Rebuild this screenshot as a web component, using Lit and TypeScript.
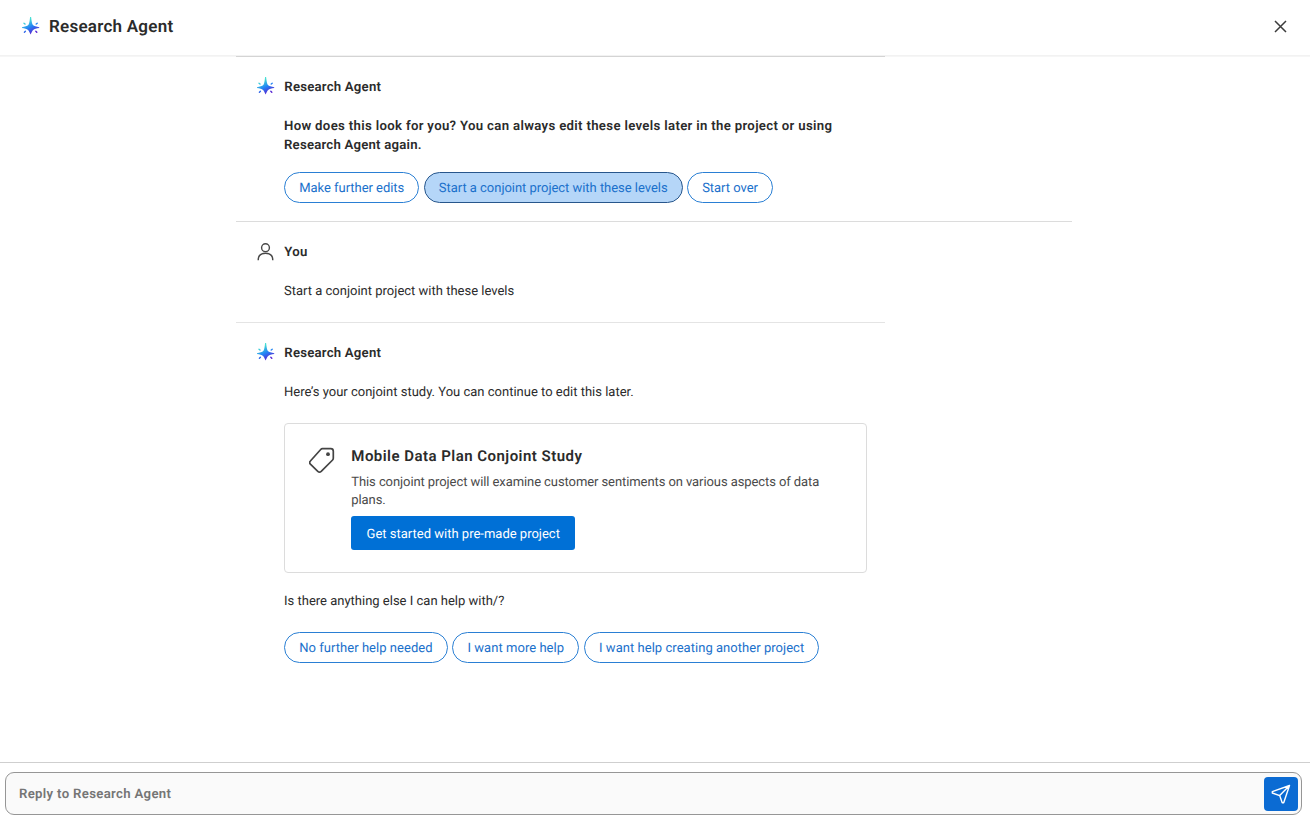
import { LitElement, html, css, svg } from "lit";
import { customElement, property } from "lit/decorators.js";
import { classMap } from "lit/directives/class-map.js";

@customElement("agent-spark")
class AgentSpark extends LitElement {
  static styles = css`
    :host { display: block; width: 18px; height: 18px; }
    svg { display: block; }
  `;
  render() {
    return html`<svg width="18" height="18" viewBox="0 0 18 18">
      <defs>
        <linearGradient id="g" gradientUnits="userSpaceOnUse" x1="6" y1="3" x2="12.5" y2="16">
          <stop offset="0" stop-color="#45dfd2" />
          <stop offset=".5" stop-color="#2484f5" />
          <stop offset="1" stop-color="#5a1fd0" />
        </linearGradient>
      </defs>
      <path fill="url(#g)" d="M8.1 0H9.1C9.5 2.8 9.7 6 10.7 7.8C12 9.2 14.5 9.8 17.2 10.2V11.1C14.5 11.4 12.3 12 11.2 13C10.2 14 9.4 15.6 8.6 17.6C7.8 15.6 7 14 6 13C4.9 12 2.7 11.4 0 11.1V10.2C2.7 9.8 5.2 9.2 6.5 7.8C7.5 6 7.7 2.8 8.1 0Z" />
      <path stroke="url(#g)" stroke-width="1.4" stroke-linecap="round" fill="none" d="M2 6.2L3 7M15.2 6.2L14.2 7M2.4 15.3L3.4 14.3M14.8 15.3L13.8 14.3" />
    </svg>`;
  }
}

@customElement("reply-pill")
class ReplyPill extends LitElement {
  @property() label = "";
  @property({ type: Boolean }) chosen = false;
  static styles = css`
    :host { display: block; }
    .pill {
      box-sizing: border-box; height: 31px; padding: 1px 14.2px 0; border: 1px solid #2a7fd4;
      border-radius: 16px; background: #fff; color: #1a70cb; font: inherit; text-rendering: inherit;
      letter-spacing: inherit; line-height: 28px; white-space: nowrap; display: block;
    }
    .pill span { display: block; padding-top: 1px; }
    .chosen { background: #b5d6f8; border-color: #27568c; }
  `;
  render() {
    return html`<button class=${classMap({ pill: true, chosen: this.chosen })}><span>${this.label}</span></button>`;
  }
}

const closeIcon = svg`<path d="M1 1L12 12M12 1L1 12" />`;

@customElement("app-root")
class AppRoot extends LitElement {
  static styles = css`
    :host {
      display: flex; flex-direction: column; height: 825px; background: #fff; color: #2b2b2b;
      font-family: Roboto, "Liberation Sans", sans-serif; font-size: 13px; letter-spacing: 0;
      line-height: 18.7px; overflow: hidden; text-rendering: geometricPrecision;
    }
    header {
      box-sizing: border-box; flex: none; height: 56px; padding: 0 23px 3px 22px; display: flex;
      align-items: center; gap: 9px; box-shadow: inset 0 -1px #f2f2f2;
    }
    h1 { margin: 1px 0 0; flex: 1; font-size: 17px; line-height: 24px; font-weight: 600; letter-spacing: 0.25px; }
    header agent-spark { margin-top: -1px; }
    .close { padding: 0; border: 0; background: none; width: 13px; height: 13px; }
    .close svg { display: block; fill: none; stroke: #3c3c3c; stroke-width: 1.5; }
    main { flex: 1; min-height: 0; padding-left: 236px; box-shadow: inset 0 1px #f6f6f6; }
    .turn { box-sizing: border-box; width: 649px; padding: 20px 18px 0 21px; border-top: 1px solid #d4d4d4; }
    .mine { width: 836px; height: 101px; }
    .first { height: 165px; }
    .mine, .latest { border-top-color: #dcdcdc; }
    .latest { border-top-color: #e4e4e4; }
    .who { display: flex; align-items: center; gap: 9px; height: 20px; font-weight: 600; font-size: 13.2px; letter-spacing: 0.22px; }
    .who span { padding: 2px 0 0 0.3px; }
    .who agent-spark { margin-top: -2px; }
    .who svg { display: block; fill: none; stroke: #484848; stroke-width: 1.4; }
    .body { padding: 20.6px 0 0 27px; }
    .first .body { padding-top: 20px; }
    p { margin: 0; }
    .strong { font-weight: 600; font-size: 13.2px; line-height: 19px; letter-spacing: 0.325px; }
    .strong span { letter-spacing: 0.21px; }
    .pills { display: flex; gap: 4.5px; }
    .first .pills { margin-top: 17px; gap: 4.2px; letter-spacing: -0.035px; }
    .latest .pills { margin-top: 20.4px; letter-spacing: 0.04px; }
    .card {
      box-sizing: border-box; width: 583px; height: 150px; margin: 20.7px 0 19.6px; padding: 22px 24px;
      border: 1px solid #dcdcdc; border-radius: 4px; display: flex; gap: 15.3px;
    }
    .tag { flex: none; width: 27px; height: 27px; margin-top: 1.5px; }
    .tag svg { display: block; fill: none; stroke: #444; stroke-width: 1.7; stroke-linejoin: round; }
    h2 { margin: 0; font-size: 15px; line-height: 20px; font-weight: 600; letter-spacing: 0.47px; }
    .desc { margin-top: 7.6px; color: #4a4a4a; letter-spacing: -0.085px; }
    .cta {
      display: block; margin-top: 5.1px; height: 34px; padding: 4px 15px 0 15.3px; border: 0; border-radius: 3px;
      background: #0070d6; color: #fff; font: inherit; letter-spacing: inherit; text-rendering: inherit;
    }
    footer { box-sizing: border-box; flex: none; height: 63px; padding: 9px 8px 10px 5px; border-top: 1px solid #cfcfcf; }
    .reply {
      box-sizing: border-box; height: 43px; border: 1px solid #969696; border-radius: 9px;
      background: #fafafa; display: flex; align-items: center; padding: 0 3px 0 13px;
    }
    .hint { flex: 1; color: #757575; font-weight: 600; font-size: 13.2px; letter-spacing: 0.32px; padding-top: 3px; }
    .send {
      width: 34px; height: 34px; padding: 0; border: 0; border-radius: 4px; background: #0b6bd3;
      display: grid; place-items: center;
    }
    .send svg { display: block; fill: none; stroke: #fff; stroke-width: 1.4; stroke-linejoin: round; }
  `;

  agent() {
    return html`<div class="who"><agent-spark></agent-spark><span>Research Agent</span></div>`;
  }

  render() {
    return html`
      <header>
        <agent-spark></agent-spark>
        <h1>Research Agent</h1>
        <button class="close" aria-label="Close"><svg width="13" height="13" viewBox="0 0 13 13">${closeIcon}</svg></button>
      </header>
      <main>
        <section class="turn first">
          ${this.agent()}
          <div class="body">
            <p class="strong">How does this look for you? You can always edit these levels later in the project or using<br /><span>Research Agent again.</span></p>
            <div class="pills">
              <reply-pill label="Make further edits"></reply-pill>
              <reply-pill label="Start a conjoint project with these levels" chosen></reply-pill>
              <reply-pill label="Start over"></reply-pill>
            </div>
          </div>
        </section>
        <section class="turn mine">
          <div class="who">
            <svg width="18" height="18" viewBox="0 0 18 18"><circle cx="8.5" cy="4.7" r="3.9" /><path d="M1.2 17.3C1.2 12.6 4.2 10.2 8.5 10.2S15.8 12.6 15.8 17.3" /></svg>
            <span>You</span>
          </div>
          <div class="body"><p>Start a conjoint project with these levels</p></div>
        </section>
        <section class="turn latest">
          ${this.agent()}
          <div class="body">
            <p>Here’s your conjoint study. You can continue to edit this later.</p>
            <div class="card">
              <div class="tag"><svg width="27" height="27" viewBox="0 0 27 27"><path d="M13.4 1.7H21.8Q24.3 1.7 24.3 4.2V11.3Q24.3 12.3 23.6 13L12.2 24.4Q10.5 26 8.8 24.4L1.4 17.2Q-.1 15.6 1.4 14L11.7 2.5Q12.4 1.7 13.4 1.7Z" /><circle cx="19" cy="7.2" r="1.9" fill="#444" stroke="none" /></svg></div>
              <div>
                <h2>Mobile Data Plan Conjoint Study</h2>
                <p class="desc">This conjoint project will examine customer sentiments on various aspects of data<br />plans.</p>
                <button class="cta">Get started with pre-made project</button>
              </div>
            </div>
            <p>Is there anything else I can help with/?</p>
            <div class="pills">
              <reply-pill label="No further help needed"></reply-pill>
              <reply-pill label="I want more help"></reply-pill>
              <reply-pill label="I want help creating another project"></reply-pill>
            </div>
          </div>
        </section>
      </main>
      <footer>
        <div class="reply">
          <span class="hint">Reply to Research Agent</span>
          <button class="send" aria-label="Send"><svg width="20" height="20" viewBox="0 0 20 20"><path d="M18.5 1.5L1.3 7.6V9L8.7 11.6L11.2 18.8H12.7ZM8.7 11.6L18.5 1.5" /></svg></button>
        </div>
      </footer>
    `;
  }
}
